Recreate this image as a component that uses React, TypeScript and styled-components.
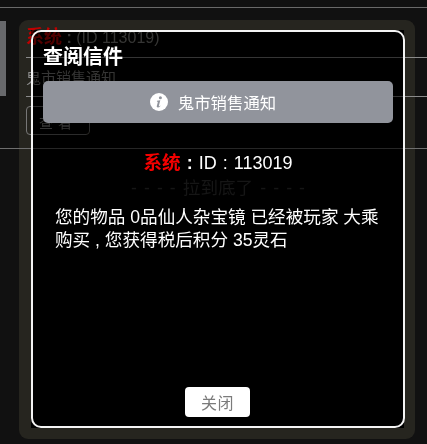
import React from "react";
import styled, { createGlobalStyle } from "styled-components";

const GlobalStyle = createGlobalStyle`
  html, body {
    margin: 0;
    padding: 0;
    background: #111111;
    font-family: "Liberation Sans", "Noto Sans CJK SC", sans-serif;
  }
  * { box-sizing: border-box; }
`;

const Page = styled.div`
  position: relative;
  width: 427px;
  height: 444px;
  padding-top: 7px;
  overflow: hidden;
  background: #111111;
`;

const TopRule = styled.div`
  height: 1px;
  background: #6a6a6a;
`;

const Body = styled.div`
  display: flex;
  align-items: flex-start;
  margin-top: 12px;
`;

const SideTab = styled.div`
  width: 6px;
  height: 75px;
  margin-top: 1px;
  background: #68696c;
`;

const Card = styled.div`
  width: 396px;
  height: 419px;
  margin-left: 13px;
  padding: 7px 0 0 7px;
  border-radius: 9px;
  background: #26251f;
`;

const SenderLine = styled.div`
  height: 31px;
  width: 401px;
  font-size: 16px;
  line-height: 20px;
  color: #8a8a8a;
  border-bottom: 1px solid #8a8a8a;
`;

const GhostName = styled.b`
  font-size: 18px;
  color: #c00000;
`;

const SubjectLine = styled.div`
  height: 39px;
  width: 401px;
  padding-top: 9px;
  font-size: 15px;
  line-height: 22px;
  color: #8a8a8a;
  border-bottom: 1px solid #8a8a8a;
`;

const NoteButton = styled.div`
  display: flex;
  align-items: center;
  justify-content: center;
  width: 64px;
  height: 29px;
  margin-top: 9px;
  padding-top: 3px;
  border: 1px solid #777777;
  border-radius: 4px;
  font-size: 14px;
  letter-spacing: 5px;
  color: #8a8a8a;
`;

const FullRule = styled.div`
  width: 427px;
  height: 1px;
  margin: 13px 0 0 -26px;
  background: #6e6e6e;
`;

const Overlay = styled.div`
  position: absolute;
  inset: 0;
  padding: 30px 22px 16px 31px;
  display: flex;
`;

const Modal = styled.div`
  flex: 1;
  backdrop-filter: brightness(0.457) contrast(1.16);
`;

const Frame = styled.div`
  height: 100%;
  display: flex;
  flex-direction: column;
  padding: 11px 10px 9px;
  border: 2px solid #f4f4f4;
  border-radius: 10px;
  color: #ffffff;
`;

const Title = styled.h2`
  margin: 0;
  font-size: 20px;
  line-height: 28px;
  font-weight: 700;
  color: #ffffff;
`;

const Banner = styled.div`
  display: flex;
  align-items: center;
  justify-content: center;
  gap: 10px;
  height: 42px;
  margin-top: 10px;
  padding-right: 10px;
  border-radius: 5px;
  background: #91949c;
  font-size: 16.4px;
  color: #ffffff;
`;

const SenderRow = styled.div`
  margin-top: 28px;
  text-align: center;
  font-size: 18px;
  line-height: 24px;
  word-spacing: 1px;
  color: #ffffff;
`;

const Red = styled.b`
  font-size: 18.6px;
  color: #f40000;
`;

const Hint = styled.div`
  margin-top: 1px;
  text-align: center;
  font-size: 17.6px;
  line-height: 24px;
  word-spacing: 2.2px;
  color: #161616;
  white-space: nowrap;
`;

const Message = styled.p`
  margin: 6px 0 0;
  padding: 0 2px 0 12px;
  font-size: 17.6px;
  line-height: 23px;
  color: #ffffff;
`;

const Footer = styled.div`
  display: flex;
  justify-content: center;
  margin-top: auto;
  padding-right: 1px;
`;

const CloseButton = styled.button`
  width: 65px;
  height: 30px;
  padding: 0;
  border: none;
  border-radius: 4px;
  background: #ffffff;
  font: inherit;
  font-size: 16px;
  letter-spacing: 0.5px;
  color: #7b7b7b;
`;

function InfoIcon() {
  return (
    <svg width="18" height="18" viewBox="0 0 18 18">
      <circle cx="9" cy="9" r="9" fill="#ffffff" />
      <circle cx="10.4" cy="4.7" r="1.5" fill="#91949c" />
      <path
        d="M7 7.8l3.3-.5-1.5 5.6c-.1.4.3.5.6.3l.8-.6.2.4c-.9 1-1.8 1.5-2.6 1.5-.9 0-1.2-.6-1-1.4l1-3.9c.1-.5-.2-.7-.9-.7z"
        fill="#91949c"
      />
    </svg>
  );
}

export default function App() {
  return (
    <Page>
      <GlobalStyle />
      <TopRule />
      <Body>
        <SideTab />
        <Card>
          <SenderLine>
            <GhostName>系统</GhostName> <b>:</b> (ID 113019)
          </SenderLine>
          <SubjectLine>鬼市销售通知</SubjectLine>
          <NoteButton>查看</NoteButton>
          <FullRule />
        </Card>
      </Body>
      <Overlay>
        <Modal>
          <Frame>
            <Title>查阅信件</Title>
            <Banner>
              <InfoIcon />
              鬼市销售通知
            </Banner>
            <SenderRow>
              <Red>系统</Red> <b>:</b> ID : 113019
            </SenderRow>
            <Hint>- - - - 拉到底了 - - - -</Hint>
            <Message>
              您的物品 0品仙人杂宝镜 已经被玩家 大乘 购买 , 您获得税后积分 35灵石
            </Message>
            <Footer>
              <CloseButton>关闭</CloseButton>
            </Footer>
          </Frame>
        </Modal>
      </Overlay>
    </Page>
  );
}
